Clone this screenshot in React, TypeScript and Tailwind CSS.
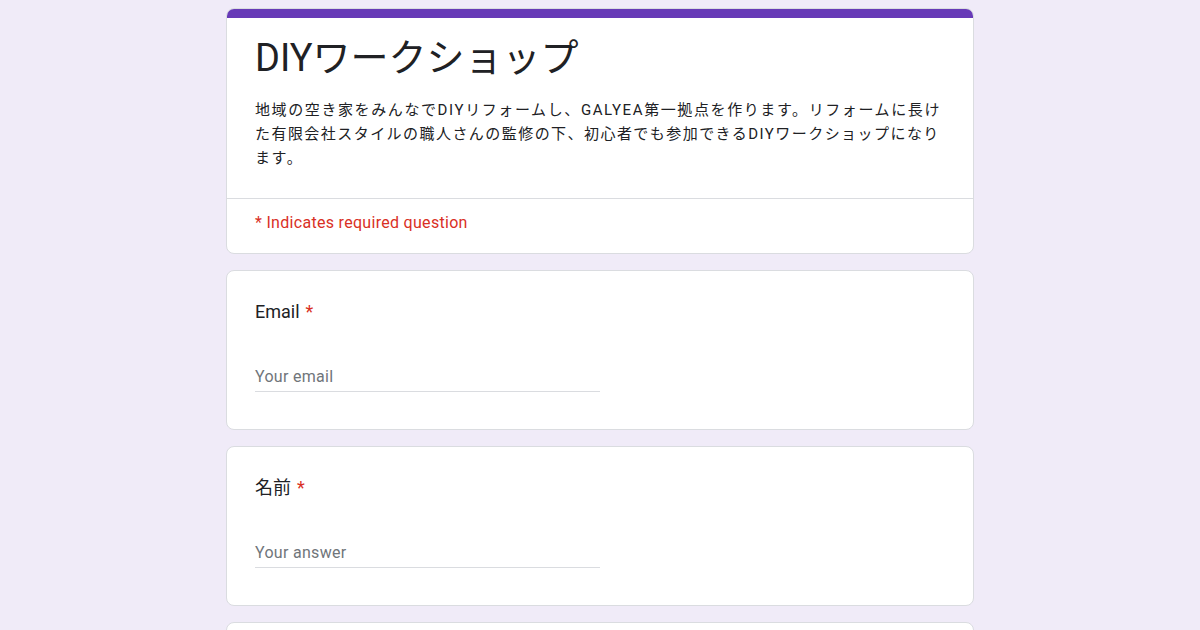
const font = { fontFamily: 'Roboto, "Noto Sans CJK JP", sans-serif' };

function Question({ label, placeholder }: { label: string; placeholder: string }) {
  return (
    <div className="bg-white border border-[#dadce0] rounded-lg px-[28px] pt-[29px] pb-[37px]">
      <div className="text-[18px] leading-6 text-[#202124]">
        {label}
        <span className="text-[#d93025] ml-1.5">*</span>
      </div>
      <div className="mt-[41px] w-[345px] border-b border-[#dadce0] pb-[2px] text-[16px] leading-6 tracking-[0.3px] text-[#70757a]">
        {placeholder}
      </div>
    </div>
  );
}

export default function App() {
  return (
    <div className="h-[630px] overflow-hidden bg-[#f0ebf8] pt-2" style={font}>
      <div className="w-[748px] mx-auto flex flex-col gap-4">
        <div className="bg-white border border-[#dadce0] rounded-lg overflow-hidden">
          <div className="h-[10px] bg-[#673ab7] -mx-px -mt-px" />
          <div className="px-[28px] pt-[20px] pb-[28px] border-b border-[#dadce0]">
            <h1 className="text-[38px] leading-[40px] text-[#202124] font-normal">DIYワークショップ</h1>
            <div className="mt-[20px] text-[15px] leading-6 text-[#202124] whitespace-nowrap">
              <p className="tracking-[1.6px]">地域の空き家をみんなでDIYリフォームし、GALYEA第一拠点を作ります。リフォームに長け</p>
              <p className="tracking-[1.45px]">た有限会社スタイルの職人さんの監修の下、初心者でも参加できるDIYワークショップになり</p>
              <p className="tracking-[1.6px]">ます。</p>
            </div>
          </div>
          <div className="px-[28px] pt-[12px] pb-[18px] text-[16px] leading-6 tracking-[0.3px] text-[#d93025]">
            * Indicates required question
          </div>
        </div>
        <Question label="Email" placeholder="Your email" />
        <Question label="名前" placeholder="Your answer" />
        <div className="bg-white border border-[#dadce0] rounded-lg h-[160px]" />
      </div>
    </div>
  );
}
